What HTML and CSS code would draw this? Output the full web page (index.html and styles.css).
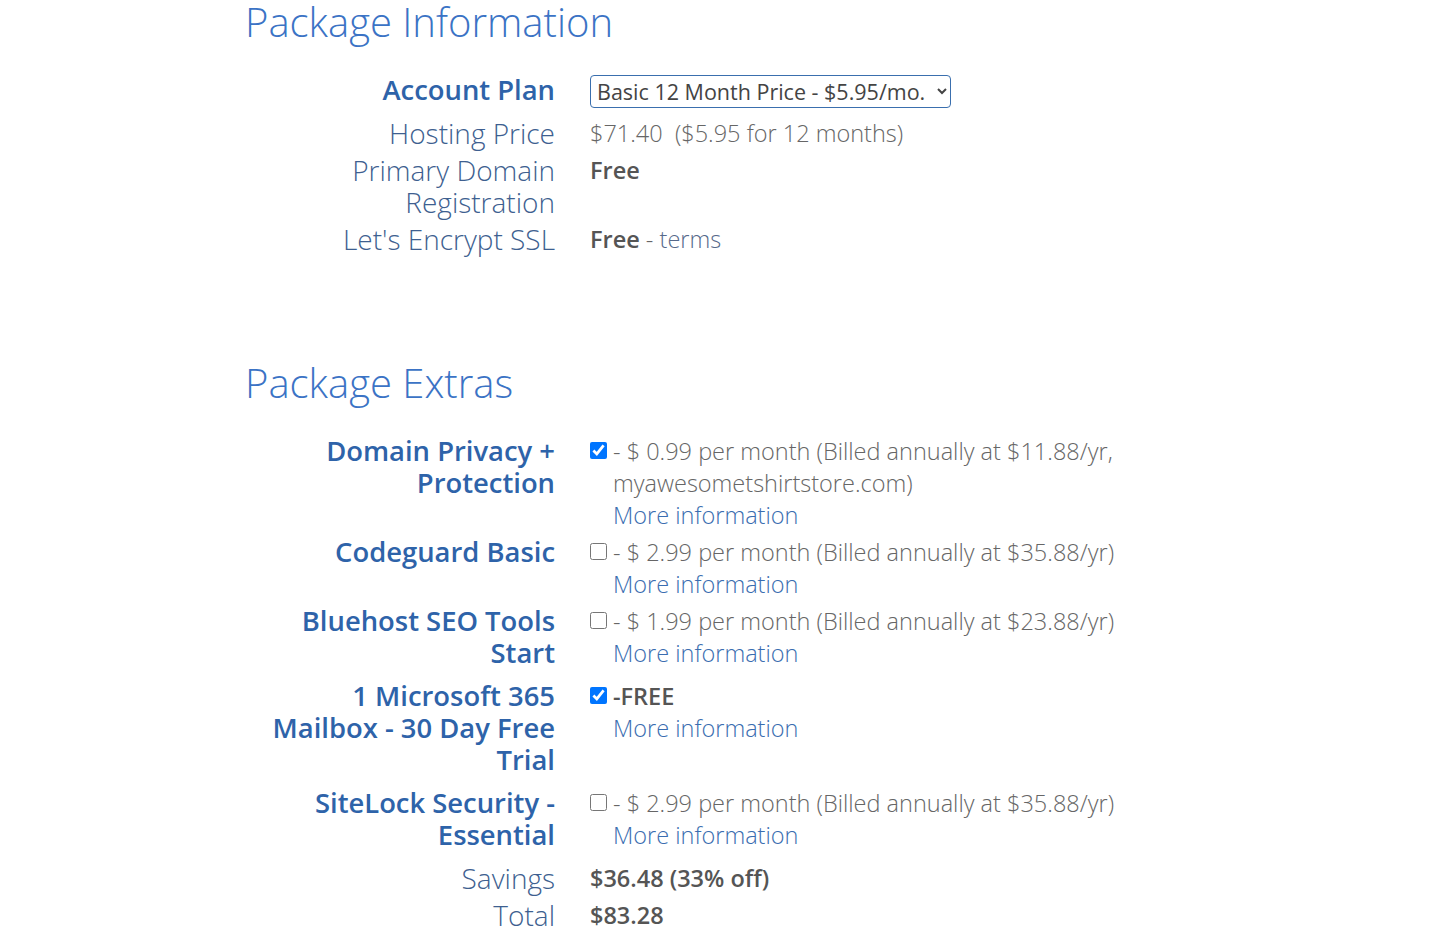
FILE: index.html
```html
<!DOCTYPE html>
<html lang="en">
<head>
<meta charset="utf-8">
<title>Package Information</title>
<link rel="stylesheet" href="styles.css">
</head>
<body>
<div class="container">
  <h2 class="section-title">Package Information</h2>
  <div class="rows">
    <div class="row">
      <div class="label strong">Account Plan</div>
      <div class="value">
        <select class="plan">
          <option>Basic 12 Month Price - $5.95/mo.</option>
        </select>
      </div>
    </div>
    <div class="row">
      <div class="label">Hosting Price</div>
      <div class="value">$71.40&nbsp; ($5.95 for 12 months)</div>
    </div>
    <div class="row">
      <div class="label">Primary Domain Registration</div>
      <div class="value"><b>Free</b></div>
    </div>
    <div class="row">
      <div class="label">Let's Encrypt SSL</div>
      <div class="value"><b>Free</b> - <a class="terms" href="#">terms</a></div>
    </div>
  </div>

  <h2 class="section-title extras-title">Package Extras</h2>
  <div class="rows">
    <div class="row">
      <div class="label strong">Domain Privacy + Protection</div>
      <div class="value check">
        <input type="checkbox" checked>
        <div class="desc">- $ 0.99 per month (Billed annually at $11.88/yr, myawesometshirtstore.com)<br><a href="#" class="more">More information</a></div>
      </div>
    </div>
    <div class="row">
      <div class="label strong">Codeguard Basic</div>
      <div class="value check">
        <input type="checkbox">
        <div class="desc">- $ 2.99 per month (Billed annually at $35.88/yr)<br><a href="#" class="more">More information</a></div>
      </div>
    </div>
    <div class="row">
      <div class="label strong">Bluehost SEO Tools Start</div>
      <div class="value check">
        <input type="checkbox">
        <div class="desc">- $ 1.99 per month (Billed annually at $23.88/yr)<br><a href="#" class="more">More information</a></div>
      </div>
    </div>
    <div class="row">
      <div class="label strong">1 Microsoft 365 Mailbox - 30 Day Free Trial</div>
      <div class="value check">
        <input type="checkbox" checked>
        <div class="desc"><b class="free">-FREE</b><br><a href="#" class="more">More information</a></div>
      </div>
    </div>
    <div class="row">
      <div class="label strong">SiteLock Security - Essential</div>
      <div class="value check">
        <input type="checkbox">
        <div class="desc">- $ 2.99 per month (Billed annually at $35.88/yr)<br><a href="#" class="more">More information</a></div>
      </div>
    </div>
    <div class="row">
      <div class="label">Savings</div>
      <div class="value"><b>$36.48 (33% off)</b></div>
    </div>
    <div class="row">
      <div class="label">Total</div>
      <div class="value"><b>$83.28</b></div>
    </div>
  </div>
</div>
</body>
</html>
```
FILE: styles.css
```css
html, body {
  margin: 0;
  padding: 0;
  background: #ffffff;
}

body {
  font-family: "Open Sans", "Liberation Sans", sans-serif;
  font-weight: 300;
  color: #666666;
}

.container {
  width: 940px;
  margin: 0 auto;
}

.section-title {
  margin: 0 0 30px -2px;
  font-size: 40px;
  line-height: 44px;
  font-weight: 300;
  color: #3b73c5;
}

.extras-title {
  margin-top: 101px;
}

.rows {
  display: flex;
  flex-direction: column;
}

.row {
  display: grid;
  grid-template-columns: 308px 540px;
  column-gap: 35px;
  margin-bottom: 5px;
  line-height: 32px;
}

.label {
  text-align: right;
  font-size: 28px;
  color: #3e5f90;
}

.label.strong {
  font-size: 27.4px;
  font-weight: 600;
  color: #2e63a9;
  padding-bottom: 6px;
}

.value {
  font-size: 23.5px;
  color: #666666;
}

.value b {
  font-weight: 600;
  color: #555555;
}

.terms {
  color: #56698a;
  text-decoration: none;
}

.plan {
  margin-top: 1px;
  width: 361px;
  height: 33px;
  padding: 0 2px;
  border: 1px solid #3a6fae;
  border-radius: 4px;
  background: #ffffff;
  font-family: "Open Sans", "Liberation Sans", sans-serif;
  font-weight: 400;
  font-size: 21.5px;
  color: #444444;
}

.check {
  display: flex;
  align-items: flex-start;
  gap: 6px;
}

.check input {
  flex: none;
  width: 17px;
  height: 17px;
  margin: 7px 0 0 0;
}

.desc {
  flex: 1;
}

.more {
  color: #3a6db0;
  text-decoration: none;
}
```
